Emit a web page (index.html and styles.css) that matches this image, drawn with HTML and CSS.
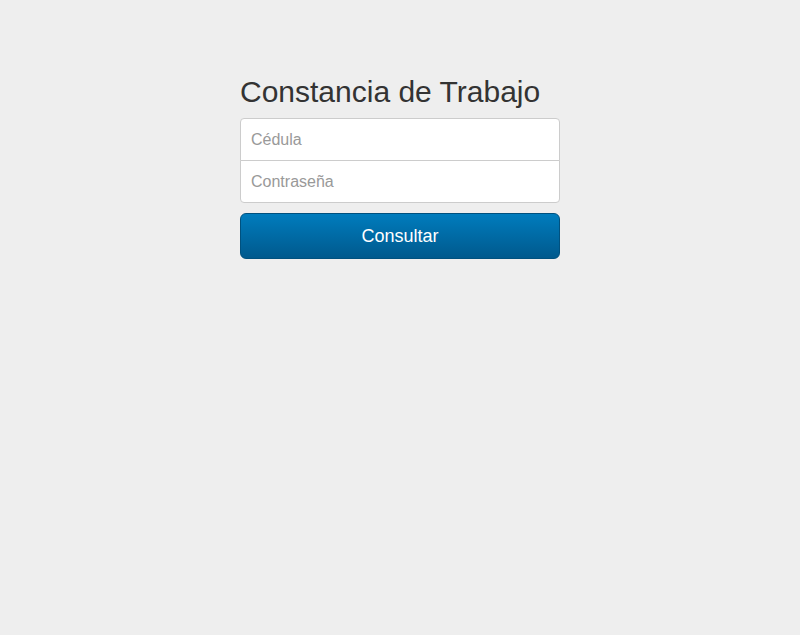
FILE: index.html
```html
<!DOCTYPE html>
<html lang="es">
<head>
<meta charset="utf-8">
<title>Constancia de Trabajo</title>
<link rel="stylesheet" href="styles.css">
</head>
<body>
<div class="container">
  <form class="form-signin">
    <h2 class="form-signin-heading">Constancia de Trabajo</h2>
    <input type="text" class="form-control first" placeholder="Cédula">
    <input type="password" class="form-control last" placeholder="Contraseña">
    <button class="btn-primary" type="button">Consultar</button>
  </form>
</div>
</body>
</html>
```
FILE: styles.css
```css
html, body {
  margin: 0;
  background: #eeeeee;
}
body {
  padding-top: 40px;
  font-family: "Liberation Sans", Arial, Helvetica, sans-serif;
  color: #333333;
}
.form-signin {
  width: 320px;
  padding: 15px;
  margin: 0 auto;
  display: flex;
  flex-direction: column;
}
.form-signin-heading {
  margin: 20px 0 10px;
  font-size: 30px;
  line-height: 33px;
  font-weight: 500;
}
.form-control {
  box-sizing: border-box;
  display: block;
  width: 100%;
  height: 43px;
  padding: 10px;
  font-size: 16px;
  font-family: inherit;
  color: #555555;
  background: #ffffff;
  border: 1px solid #cccccc;
  outline: none;
  margin: 0;
}
.form-control::placeholder {
  color: #999999;
}
.form-control.first {
  border-radius: 4px 4px 0 0;
  margin-bottom: -1px;
}
.form-control.last {
  border-radius: 0 0 4px 4px;
  margin-bottom: 10px;
}
.btn-primary {
  box-sizing: border-box;
  display: block;
  width: 100%;
  height: 46px;
  padding: 10px 16px;
  font-size: 18px;
  line-height: 24px;
  font-family: inherit;
  color: #ffffff;
  background: linear-gradient(to bottom, #007cbd 0%, #00598d 100%);
  border: 1px solid #00517f;
  border-radius: 6px;
  cursor: pointer;
}
```
